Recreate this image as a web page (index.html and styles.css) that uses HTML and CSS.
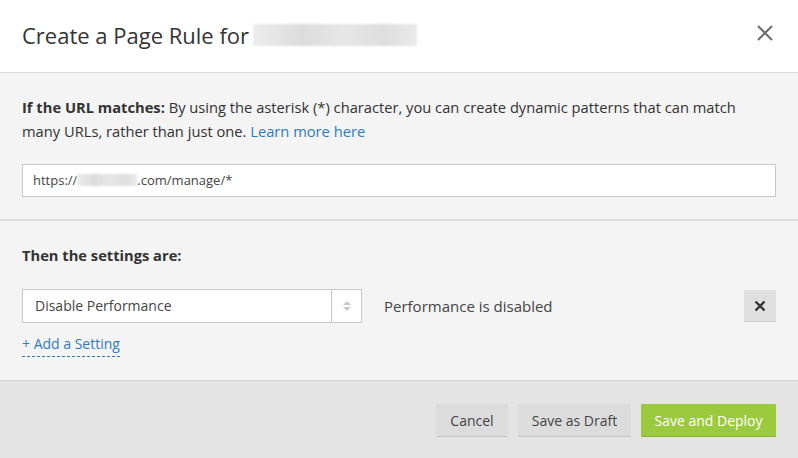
FILE: index.html
```html
<!DOCTYPE html>
<html lang="en">
<head>
  <meta charset="UTF-8">
  <title>Create a Page Rule</title>
  <link rel="stylesheet" href="styles.css">
</head>
<body>
  <div class="modal">
    <header class="modal-header">
      <h2>Create a Page Rule for <span class="blurred"></span></h2>
      <button class="close-button" aria-label="Close">
        <svg width="16" height="16" viewBox="0 0 16 16"><path d="M1 1L15 15M15 1L1 15" stroke="#6b6b6b" stroke-width="2"/></svg>
      </button>
    </header>

    <section class="rule-section">
      <p class="intro"><strong>If the URL matches:</strong> By using the asterisk (*) character, you can create dynamic patterns that can match many URLs, rather than just one. <a href="#">Learn more here</a></p>
      <div class="url-input">https://<span class="blurred small"></span>.com/manage/*</div>
    </section>

    <section class="settings-section">
      <p class="label"><strong>Then the settings are:</strong></p>
      <div class="setting-row">
        <div class="select">
          <span class="select-value">Disable Performance</span>
          <span class="select-arrows">
            <svg width="10" height="14" viewBox="0 0 10 14"><path d="M5 2L9 6H1Z M5 12L9 8H1Z" fill="#c8c8c8"/></svg>
          </span>
        </div>
        <span class="setting-desc">Performance is disabled</span>
        <button class="remove-button" aria-label="Remove">
          <svg width="12" height="12" viewBox="0 0 12 12"><path d="M1.5 1.5L10.5 10.5M10.5 1.5L1.5 10.5" stroke="#333" stroke-width="2.4"/></svg>
        </button>
      </div>
      <a href="#" class="add-setting">+ Add a Setting</a>
    </section>

    <footer class="modal-footer">
      <button class="btn btn-cancel">Cancel</button>
      <button class="btn btn-draft">Save as Draft</button>
      <button class="btn btn-primary">Save and Deploy</button>
    </footer>
  </div>
</body>
</html>
```

FILE: styles.css
```css
body {
  margin: 0;
  font-family: "Open Sans", sans-serif;
  color: #333;
  background: #f4f4f4;
}
.modal {
  width: 798px;
  height: 458px;
  display: flex;
  flex-direction: column;
}
.modal-header {
  height: 72px;
  background: #fff;
  border-bottom: 1px solid #dcdcdc;
  display: flex;
  align-items: center;
  justify-content: space-between;
  padding: 0 22px;
}
.modal-header h2 {
  margin: -2px 0 0;
  font-size: 22px;
  font-weight: 400;
  color: #333;
  display: flex;
  align-items: center;
}
.blurred {
  display: inline-block;
  width: 164px;
  height: 22px;
  margin-left: 4px;
  background: linear-gradient(90deg, #ececec, #dcdcdc 30%, #e6e6e6 55%, #dedede 80%, #eaeaea);
  filter: blur(1px);
}
.blurred.small {
  width: 60px;
  height: 12px;
  margin: 0;
  vertical-align: -1px;
}
.close-button {
  background: none;
  border: none;
  padding: 0;
  margin-right: 3px;
  margin-top: -6px;
  cursor: pointer;
  display: flex;
}
.rule-section {
  padding: 22px 22px 22px;
  border-bottom: 2px solid #dcdcdc;
}
.intro {
  margin: 0 0 21px;
  font-size: 14.7px;
  line-height: 24px;
}
a {
  color: #2f7bbf;
  text-decoration: none;
}
.url-input {
  height: 31px;
  border: 1px solid #c8c8c8;
  background: #fff;
  font-size: 13px;
  line-height: 31px;
  padding: 0 10px;
  color: #444;
}
.settings-section {
  padding: 22px 22px 0;
  height: 137px;
  border-bottom: 1px solid #d6d6d6;
}
.label {
  margin: 0 0 22px;
  font-size: 14.7px;
  line-height: 24px;
}
.setting-row {
  display: flex;
  align-items: center;
}
.select {
  width: 338px;
  height: 32px;
  border: 1px solid #c8c8c8;
  background: #fff;
  display: flex;
  font-size: 14px;
}
.select-value {
  flex: 1;
  line-height: 32px;
  padding-left: 12px;
  color: #444;
}
.select-arrows {
  width: 29px;
  border-left: 1px solid #c8c8c8;
  display: flex;
  align-items: center;
  justify-content: center;
}
.setting-desc {
  margin-left: 22px;
  font-size: 15px;
  color: #444;
  flex: 1;
}
.remove-button {
  width: 32px;
  height: 32px;
  background: #e0e0e0;
  border: none;
  border-bottom: 1px solid #cfcfcf;
  display: flex;
  align-items: center;
  justify-content: center;
  cursor: pointer;
  padding: 0;
}
.add-setting {
  display: inline-block;
  margin-top: 9px;
  font-size: 14px;
  line-height: 24px;
  border-bottom: 1px dashed #2f7bbf;
}
.modal-footer {
  flex: 1;
  background: #e4e4e4;
  display: flex;
  justify-content: flex-end;
  align-items: flex-start;
  gap: 10px;
  padding: 23px 22px 0;
}
.btn {
  height: 33px;
  padding: 0;
  font-family: "Open Sans", sans-serif;
  font-size: 14px;
  color: #444;
  background: #dcdcdc;
  border: none;
  border-bottom: 1px solid #c4c4c4;
  border-radius: 1px;
  cursor: pointer;
}
.btn-cancel {
  width: 72px;
}
.btn-draft {
  width: 113px;
}
.btn-primary {
  width: 135px;
  background: #9bca3e;
  border-bottom-color: #8ab534;
  color: #fff;
}
```
